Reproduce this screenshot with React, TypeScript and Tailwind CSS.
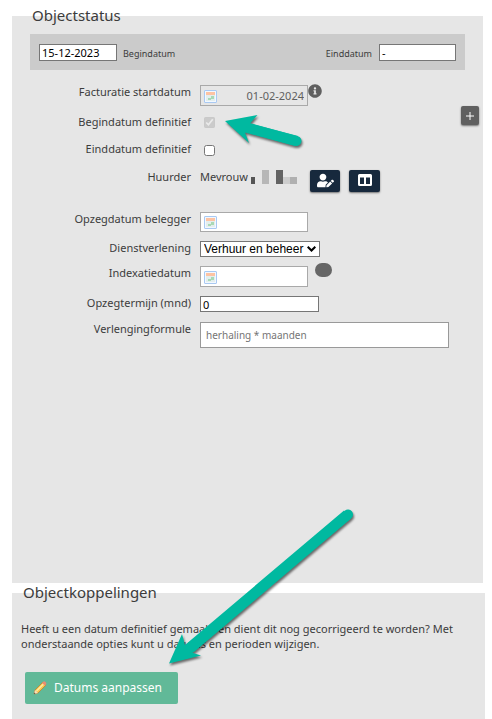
import type { ReactNode } from "react";
import { FaInfoCircle, FaUserEdit } from "react-icons/fa";

function CalendarIcon() {
  return (
    <svg width="13" height="13" viewBox="0 0 13 13" className="shrink-0" aria-hidden="true">
      <rect x="0.5" y="0.5" width="12" height="12" rx="0.5" fill="#f2f8ff" stroke="#a9c9f2" />
      <rect x="2" y="2" width="9" height="3" fill="#fdc3a3" />
      <rect x="2" y="5" width="9" height="6" fill="#e3eeee" />
      <path d="M7 6h3v3H7zM4 8h3v2H4z" fill="#a9d9b5" />
    </svg>
  );
}

function Row({ id, label, className, children }: { id?: string; label: string; className: string; children: ReactNode }) {
  return (
    <div className={`flex items-start gap-[9px] ${className}`}>
      <label htmlFor={id} className="w-[161px] shrink-0 text-right leading-4">
        {label}
      </label>
      {children}
    </div>
  );
}

function DateField({ id, value, disabled, className }: { id: string; value?: string; disabled?: boolean; className: string }) {
  return (
    <div className={`mt-px flex w-[108px] items-center border border-[#a9a9a9] pl-[3px] pr-[3px] pt-px ${className}`}>
      <CalendarIcon />
      <input
        id={id}
        defaultValue={value}
        disabled={disabled}
        className="w-full min-w-0 text-right text-[#606060] outline-none"
      />
    </div>
  );
}

function Arrow({ className, width, height, path, line }: { className: string; width: number; height: number; path: string; line: string }) {
  return (
    <svg
      width={width}
      height={height}
      viewBox={`0 0 ${width} ${height}`}
      className={`pointer-events-none absolute overflow-visible drop-shadow-[1px_2px_1px_rgba(0,0,0,0.55)] ${className}`}
      aria-hidden="true"
    >
      <path d={path} fill="#00b9a0" />
      <path d={line} stroke="#00b9a0" strokeWidth="10" strokeLinecap="round" />
    </svg>
  );
}

export default function App() {
  return (
    <main className="relative bg-white pl-3 pt-4 font-['Noto_Sans',sans-serif] text-[11px] text-[#3c3c3c]">
      <section className="relative mr-[9px] flex min-h-[567px] flex-col bg-[#e6e6e6] pl-[18px] pr-[18px]">
        <h2 className="-mt-[11px] ml-[2px] text-[15px] leading-5">Objectstatus</h2>

        <div className="mt-[9px] flex h-9 items-center justify-between bg-[#cbcbcb] px-[9px] text-[9px]">
          <div className="flex items-center gap-[6px]">
            <input
              id="begin"
              defaultValue="15-12-2023"
              className="h-[17px] w-[78px] border border-[#767676] bg-white px-[2px] text-[11px] text-black"
            />
            <label htmlFor="begin" className="pt-1">Begindatum</label>
          </div>
          <div className="flex items-center gap-[7px]">
            <label htmlFor="eind" className="pt-1">Einddatum</label>
            <input
              id="eind"
              defaultValue="-"
              className="h-[17px] w-[77px] border border-[#767676] bg-white px-[2px] text-[11px] text-black"
            />
          </div>
        </div>

        <form className="mt-[14px]">
          <Row id="facturatie" label="Facturatie startdatum" className="h-[30px]">
            <div className="flex items-start">
              <DateField id="facturatie" value="01-02-2024" disabled className="h-[21px]" />
              <FaInfoCircle size={14} color="#606060" />
            </div>
          </Row>
          <Row id="begindef" label="Begindatum definitief" className="h-[27px]">
            <input id="begindef" type="checkbox" defaultChecked disabled className="ml-1 mt-[3px] size-[11px]" />
          </Row>
          <Row id="einddef" label="Einddatum definitief" className="h-7">
            <input id="einddef" type="checkbox" className="ml-1 mt-1 size-[11px]" />
          </Row>
          <div className="flex h-[42px] items-start gap-[9px]">
            <span className="w-[161px] shrink-0 text-right leading-4">Huurder</span>
            <div className="flex items-start">
              <span className="w-[51px] leading-4">Mevrouw</span>
              <svg width="46" height="15" viewBox="0 0 46 15" aria-hidden="true">
                <rect y="8" width="4" height="7" fill="#555" />
                <rect x="11" y="1" width="7" height="14" fill="#b7b7b7" />
                <rect x="25" y="1" width="7" height="14" fill="#636363" />
                <rect x="32" y="8" width="7" height="7" fill="#cdcdcd" />
                <rect x="39" y="8" width="7" height="7" fill="#b0b0b0" />
              </svg>
              <button
                type="button"
                aria-label="Huurder bewerken"
                className="ml-[13px] mt-px flex h-[22px] w-[30px] items-center justify-center rounded-[2px] bg-[#17293d] pb-[2px] text-white shadow-[0_1px_2px_rgba(0,0,0,0.5)]"
              >
                <FaUserEdit size={17} />
              </button>
              <button
                type="button"
                aria-label="Kolommen"
                className="ml-[9px] mt-px flex h-[22px] w-[31px] items-center justify-center rounded-[2px] bg-[#17293d] pb-[2px] text-white shadow-[0_1px_2px_rgba(0,0,0,0.5)]"
              >
                <svg width="14" height="12" viewBox="0 0 14 12" aria-hidden="true">
                  <path
                    fillRule="evenodd"
                    fill="currentColor"
                    d="M1.5 0h11A1.5 1.5 0 0 1 14 1.500v9a1.500 1.500 0 0 1-1.500 1.500h-11A1.500 1.500 0 0 1 0 10.500v-9A1.500 1.500 0 0 1 1.500 0zM2 3.500v6.500h4V3.500zM8 3.500v6.500h4V3.500z"
                  />
                </svg>
              </button>
            </div>
          </div>
          <Row id="opzeg" label="Opzegdatum belegger" className="h-[29px]">
            <DateField id="opzeg" className="h-5 bg-white" />
          </Row>
          <Row id="dienst" label="Dienstverlening" className="h-[25px]">
            <div className="relative mt-px">
              <select
                id="dienst"
                className="block h-4 w-[120px] appearance-none border border-[#767676] bg-white pl-[3px] font-['Liberation_Sans',sans-serif] text-[12px] leading-[14px] text-black"
              >
                <option>Verhuur en beheer</option>
              </select>
              <svg
                width="9"
                height="6"
                viewBox="0 0 9 6"
                className="pointer-events-none absolute right-1 top-[5px]"
                fill="none"
                stroke="#000"
                strokeWidth="2"
                aria-hidden="true"
              >
                <path d="M0.700 0.700l3.800 3.800 3.800-3.800" />
              </svg>
            </div>
          </Row>
          <Row id="index" label="Indexatiedatum" className="h-[30px]">
            <DateField id="index" className="h-[21px] bg-white" />
            <span className="-ml-[2px] -mt-[2px] h-[14px] w-[17px] rounded-full bg-[#666]" />
          </Row>
          <Row id="termijn" label="Opzegtermijn (mnd)" className="h-[26px]">
            <input
              id="termijn"
              defaultValue="0"
              className="mt-px h-4 w-[119px] border border-[#767676] bg-white px-[2px] pt-[2px] text-black"
            />
          </Row>
          <Row id="formule" label="Verlengingformule" className="h-7">
            <input
              id="formule"
              placeholder="herhaling * maanden"
              className="mt-px h-[26px] w-[249px] border border-[#999] bg-white px-[5px] text-[10px] placeholder:text-[#757575]"
            />
          </Row>
        </form>

        <button
          type="button"
          aria-label="Toevoegen"
          className="absolute right-1 top-[90px] flex h-[19px] w-[18px] items-center justify-center rounded-[2px] bg-[#606060] text-white shadow-[0_1px_2px_rgba(0,0,0,0.5)]"
        >
          <svg width="8" height="8" viewBox="0 0 8 8" stroke="currentColor" aria-hidden="true">
            <path d="M4 0v8M0 4h8" />
          </svg>
        </button>
      </section>

      <section className="mr-[7px] mt-[10px] flex min-h-[126px] flex-col items-start bg-[#e6e6e6] px-[9px]">
        <h2 className="-mt-[11px] ml-[2px] text-[15px] leading-5">Objectkoppelingen</h2>
        <p className="mt-[19px] leading-[15px]">
          Heeft u een datum definitief gemaakt en dient dit nog gecorrigeerd te worden? Met onderstaande opties kunt u
          datums en perioden wijzigen.
        </p>
        <button
          type="button"
          className="ml-1 mt-[21px] flex h-8 w-[153px] items-center gap-[7px] rounded-[2px] bg-[#61b998] pl-2 text-[12px] text-white"
        >
          <svg width="14" height="14" viewBox="0 0 14 14" aria-hidden="true">
            <path d="M1 13l1-4 8-8 3 3-8 8z" fill="#f8c951" stroke="#b97a2c" strokeWidth="0.7" />
            <path d="M3 9.500l7-7 1 1-7 7z" fill="#ffeaa0" />
            <path d="M9 2l1.500-1.500q1-.5 2 .5t.8 2L12 4.700z" fill="#e98d72" />
            <path d="M1 13l1-4 3 3z" fill="#f6dfbd" />
            <path d="M1 13l.4-1.500 1.100 1.100z" fill="#333" />
          </svg>
          Datums aanpassen
        </button>
      </section>

      <Arrow
        className="left-[225px] top-[115px]"
        width={77}
        height={32}
        path="M0 6L32.500 0 25 8.500 73 21 70 31 20 17.500 24 28z"
        line="M26 13.500L71.500 26"
      />
      <Arrow
        className="left-[169px] top-[509px]"
        width={185}
        height={155}
        path="M0 154.500L13 125 16 136 175 1.500 182 9.500 21 143 32 146.500z"
        line="M22 139L179 5.500"
      />
    </main>
  );
}
